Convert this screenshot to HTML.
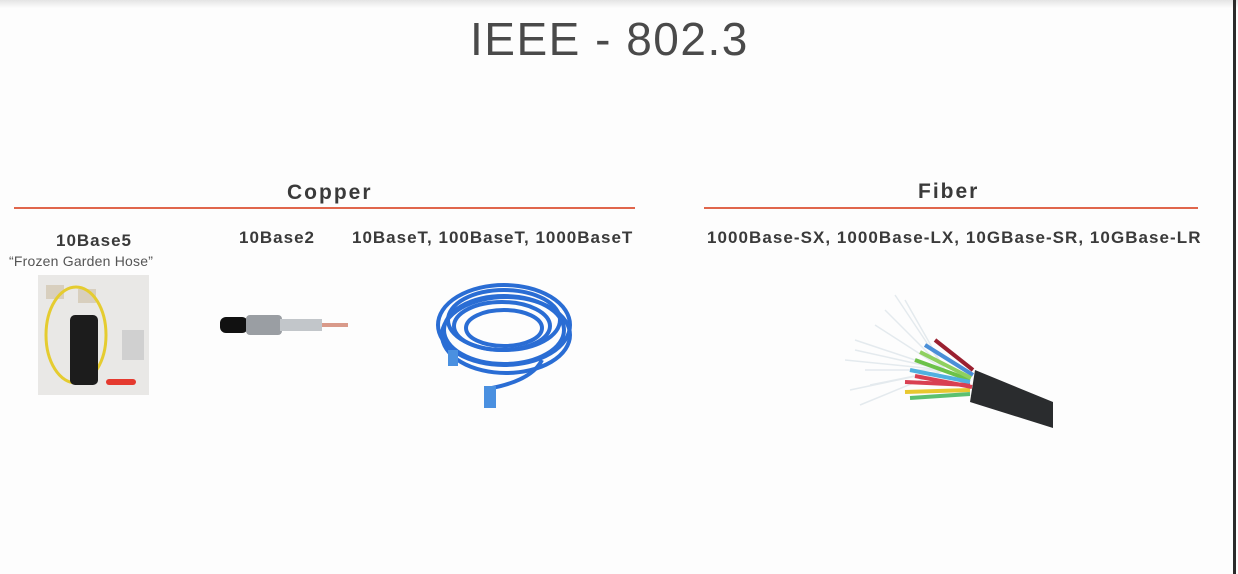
<!DOCTYPE html>
<html><head><style>
body{margin:0;width:1238px;height:574px;background:#fdfdfd;position:relative;overflow:hidden;font-family:"Liberation Sans",sans-serif;color:#333}
.t{position:absolute;white-space:nowrap}
.b{font-weight:bold;font-size:17px;color:#3a3a3a;letter-spacing:1px}
</style></head><body>
<div style="position:absolute;left:0;top:0;width:1238px;height:8px;background:linear-gradient(#e4e4e4,#fdfdfd)"></div>
<div style="position:absolute;left:1233px;top:0;width:3px;height:574px;background:#2a2a2a"></div>
<div class="t" style="left:470px;top:12px;font-size:46px;color:#4a4a4a;letter-spacing:1.5px">IEEE - 802.3</div>
<div class="t b" style="left:287px;top:181px;font-size:21px;letter-spacing:2px">Copper</div>
<div style="position:absolute;left:14px;top:207px;width:621px;height:2px;background:#e0664c"></div>
<div class="t b" style="left:918px;top:180px;font-size:21px;letter-spacing:2px">Fiber</div>
<div style="position:absolute;left:704px;top:207px;width:494px;height:2px;background:#e0664c"></div>
<div class="t b" style="left:56px;top:231px">10Base5</div>
<div class="t" style="left:9px;top:253px;font-size:14px;color:#555;letter-spacing:0.2px">“Frozen Garden Hose”</div>
<div class="t b" style="left:239px;top:228px">10Base2</div>
<div class="t b" style="left:352px;top:228px">10BaseT, 100BaseT, 1000BaseT</div>
<div class="t b" style="left:707px;top:228px;letter-spacing:1.05px">1000Base-SX, 1000Base-LX, 10GBase-SR, 10GBase-LR</div>
<svg style="position:absolute;left:38px;top:275px" width="111" height="120">
<rect width="111" height="120" fill="#e9e8e6"/>
<rect x="8" y="10" width="18" height="14" fill="#d8cfbe"/><rect x="40" y="14" width="18" height="14" fill="#d8cfbe"/>
<ellipse cx="38" cy="60" rx="30" ry="48" fill="none" stroke="#e5cc30" stroke-width="3"/>
<rect x="32" y="40" width="28" height="70" rx="5" fill="#1c1c1c"/>
<rect x="84" y="55" width="22" height="30" fill="#d0d0d0"/>
<rect x="68" y="104" width="30" height="6" rx="3" fill="#e53a2f"/>
</svg>
<svg style="position:absolute;left:218px;top:298px" width="132" height="55">
<rect x="2" y="19" width="28" height="16" rx="6" fill="#111"/>
<rect x="28" y="17" width="36" height="20" rx="4" fill="#9a9ea3"/>
<rect x="62" y="21" width="42" height="12" fill="#c2c6ca"/>
<rect x="104" y="25" width="26" height="4" fill="#d99a8a"/>
</svg>
<svg style="position:absolute;left:432px;top:270px" width="145" height="148">
<g fill="none" stroke="#2a6dd4" stroke-width="4">
<ellipse cx="72" cy="55" rx="66" ry="40"/><ellipse cx="72" cy="60" rx="60" ry="34"/><ellipse cx="72" cy="50" rx="56" ry="30"/><ellipse cx="74" cy="65" rx="64" ry="38"/><ellipse cx="70" cy="56" rx="48" ry="24"/><ellipse cx="72" cy="58" rx="38" ry="18"/>
<path d="M110 90 Q100 110 60 118"/>
</g>
<rect x="16" y="80" width="10" height="16" fill="#4a90e0"/><rect x="52" y="116" width="12" height="22" fill="#4a90e0"/>
</svg>
<svg style="position:absolute;left:845px;top:290px" width="210" height="140">
<g stroke="#e4eaee" stroke-width="1.5"><path d="M100 80 L10 50 M100 80 L20 80 M100 80 L5 100 M100 80 L40 20 M100 80 L60 10 M100 80 L15 115 M100 80 L30 35 M100 80 L0 70 M100 80 L25 95 M100 80 L50 5 M100 80 L10 60"/></g>
<g stroke-width="4"><path d="M125 90 L70 70" stroke="#6cc24a"/><path d="M125 95 L60 92" stroke="#d94052"/><path d="M128 85 L80 55" stroke="#4a8fd8"/><path d="M125 100 L60 102" stroke="#e8c830"/><path d="M128 80 L90 50" stroke="#9a2030"/><path d="M125 92 L65 80" stroke="#50b0e0"/><path d="M126 88 L75 62" stroke="#8fd060"/><path d="M125 104 L65 108" stroke="#5cc070"/><path d="M127 97 L70 86" stroke="#d94052"/></g>
<path d="M130 80 L208 112 L208 138 L125 112 Z" fill="#2a2c2e"/>
</svg>
</body></html>
